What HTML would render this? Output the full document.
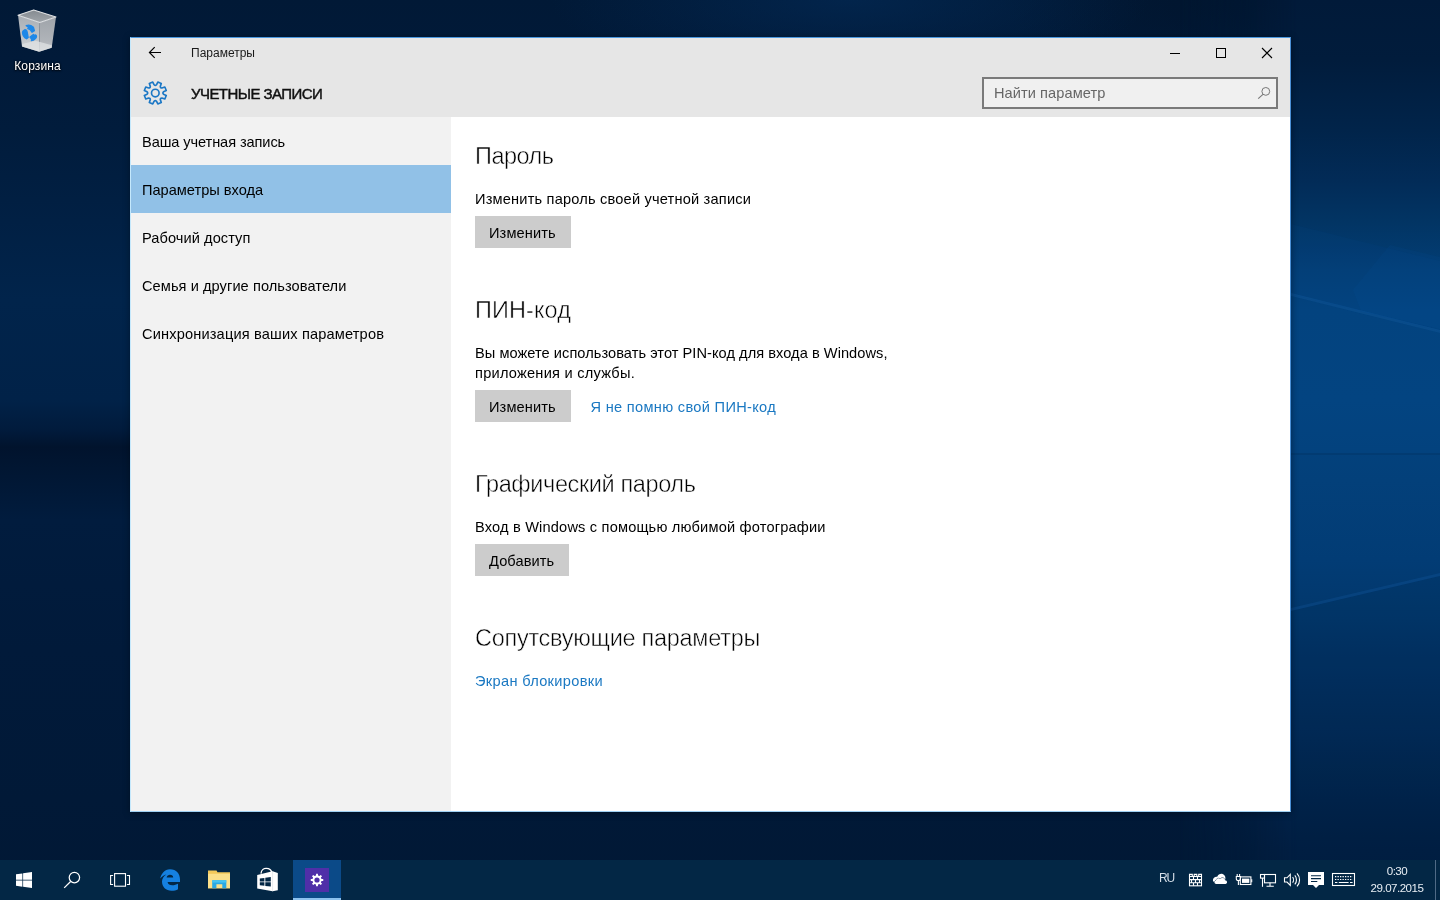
<!DOCTYPE html>
<html lang="ru">
<head>
<meta charset="utf-8">
<title>Параметры</title>
<style>
*{box-sizing:border-box;margin:0;padding:0}
html,body{width:1440px;height:900px;overflow:hidden}
body{position:relative;font-family:"Liberation Sans",sans-serif;color:#000;background:#021a38}
.abs{position:absolute}
#desk{will-change:transform;position:absolute;left:0;top:0;width:1440px;height:900px;overflow:hidden}
#desk svg{position:absolute;left:0;top:0}
/* window */
#win{will-change:transform;position:absolute;left:130px;top:37px;width:1161px;height:775px;background:#fff;border:1px solid #4a98df;border-left-color:#c4e8fc;border-right-color:#4a8fd6;border-bottom-color:#9fd0f2;box-shadow:0 1px 7px rgba(0,0,0,.35)}
#hdr{position:absolute;left:0;top:0;width:1159px;height:79px;background:#e6e6e6}
#side{position:absolute;left:0;top:79px;width:320px;height:694px;background:#f2f2f2}
.nav{position:absolute;left:0;width:320px;height:48px;line-height:48px;padding-top:1px;padding-left:11px;font-size:14.6px;white-space:nowrap}
.nav.sel{background:#91c1e7}
.t{position:absolute;white-space:nowrap;line-height:1}
.h{position:absolute;white-space:nowrap;line-height:1;font-size:23.5px;color:#000;-webkit-text-stroke:0.5px #fff}
.p{position:absolute;white-space:nowrap;line-height:20px;font-size:14.6px}
.btn{position:absolute;height:32px;background:#ccc;font-size:14.6px;line-height:34px;padding-left:14px;letter-spacing:0.1px;white-space:nowrap}
.lnk{position:absolute;white-space:nowrap;line-height:20px;font-size:14.6px;color:#1a78c2}
/* taskbar */
#tb{will-change:transform;position:absolute;left:0;top:860px;width:1440px;height:40px;background:#032745}
</style>
</head>
<body>
<div id="desk">
  <div class="abs" style="left:0;top:0;width:1440px;height:900px;background:radial-gradient(ellipse 300px 80px at 850px 0px,rgba(3,44,90,.6),rgba(3,44,90,0) 100%),radial-gradient(ellipse 300px 90px at 1300px 0px,rgba(1,15,34,.5),rgba(1,15,34,0) 100%),linear-gradient(180deg,#011936 0.00%,#011a39 6.67%,#011c3c 14.44%,#011f42 22.22%,#01244b 33.33%,#012248 44.44%,#011b3c 47.78%,#01132d 49.67%,#011632 52.00%,#011c3e 57.78%,#011a3a 72.22%,#011937 88.89%,#011835 100.00%)"></div>
  <div class="abs" style="left:1180px;top:0;width:260px;height:900px;background:linear-gradient(180deg,#011a39 0.00%,#011c3c 6.67%,#01244a 14.44%,#022b57 20.00%,#023463 24.44%,#033e75 30.00%,#03427d 34.44%,#03437f 44.44%,#03407a 53.33%,#023c75 62.22%,#02376b 68.89%,#022f60 75.56%,#022a56 82.22%,#01234b 88.89%,#011f43 94.44%,#011d40 100.00%);-webkit-mask-image:linear-gradient(90deg,rgba(0,0,0,0) 0%,rgba(0,0,0,.35) 25%,#000 45%);mask-image:linear-gradient(90deg,rgba(0,0,0,0) 0%,rgba(0,0,0,.35) 25%,#000 45%)"></div>
  <svg class="abs" style="left:1291px;top:0" width="149" height="860" viewBox="0 0 149 860">
    <path d="M0 224 L149 261 L149 331 L0 294Z" fill="#0a5ab0" opacity="0.07"/>
    <path d="M62 290 L99 245 L149 257 L149 329 L70 311Z" fill="#0c60b8" opacity="0.07"/>
    <path d="M0 293 L149 330 L149 333 L0 296Z" fill="#2a7ad0" opacity="0.16"/>
    <path d="M0 296 L149 333 L149 453 L0 453Z" fill="#0a5ab0" opacity="0.05"/>
    <path d="M0 453 H149 V455 H0Z" fill="#011a39" opacity="0.14"/>
    <path d="M0 608 L149 573 L149 576 L0 611Z" fill="#2a7ad0" opacity="0.15"/>
    <path d="M0 611 L149 576 L149 860 L0 860Z" fill="#011a39" opacity="0.10"/>
  </svg>
  <svg class="abs" style="left:0;top:0" width="80" height="60" viewBox="0 0 80 60">
    <defs>
      <linearGradient id="bl" x1="0" y1="0" x2="0" y2="1"><stop offset="0" stop-color="#a9aeb4"/><stop offset="0.7" stop-color="#c3c7cb"/><stop offset="1" stop-color="#d9dbdd"/></linearGradient>
      <linearGradient id="br" x1="0" y1="0" x2="0" y2="1"><stop offset="0" stop-color="#9fa4aa"/><stop offset="0.7" stop-color="#b0b4b9"/><stop offset="1" stop-color="#c9ccd0"/></linearGradient>
      <linearGradient id="bi" x1="0" y1="0" x2="0" y2="1"><stop offset="0" stop-color="#848a90"/><stop offset="1" stop-color="#a0a5aa"/></linearGradient>
    </defs>
    <path d="M18 15.3 L39.8 22.5 L39.2 51.7 L22 46.4Z" fill="url(#bl)"/>
    <path d="M39.8 22.5 L56 16.9 L51.7 47.8 L39.2 51.7Z" fill="url(#br)"/>
    <path d="M22.3 44 L35.5 40.8 L51.9 45.2 L51.7 47.8 L39.2 51.7 L22 46.4Z" fill="#dfe1e3" opacity="0.75"/>
    <path d="M18 15.3 L33.7 9.9 L56 16.9 L39.8 22.5Z" fill="url(#bi)" stroke="#dfe1e3" stroke-width="1.1" stroke-linejoin="round"/>
    <g fill="#1e88e8" stroke="#1e88e8" stroke-width="1.3" stroke-linejoin="round">
      <path d="M26.2 25.6 C28.5 24.6 31.5 25.5 33.4 27.2 L34.4 30.6 L32 32.2 C31 30 29.4 28.8 27.8 28.6 L28.6 27.2Z"/>
      <path d="M24.2 30 C25.3 29.3 26.6 30 27 31.4 C27.6 33.6 27.8 35.5 28.2 37.4 L26.6 38.8 C24.4 37.6 22.6 34.8 22.5 32.4 C22.5 31.2 23.2 30.4 24.2 30Z"/>
      <path d="M30 37 L33.4 34.4 L33.4 35.6 C34.6 35 35.6 34.6 36.2 35.4 C36.8 36.6 35.8 38.8 33.4 40.2 L31.4 40.6 L31.6 39.2Z"/>
    </g>
  </svg>
  <div class="t" id="binlbl" style="left:0;top:60px;width:75px;text-align:center;font-size:12px;color:#fff;text-shadow:0 1px 2px rgba(0,0,0,.9),0 0 2px rgba(0,0,0,.8);letter-spacing:0.1px">Корзина</div>
</div>

<div id="win">
  <div id="hdr">
    <svg class="abs" style="left:17px;top:8px" width="16" height="14" viewBox="0 0 16 14"><path d="M6.7 1.1 L1.4 6.5 L6.7 11.9 M1.5 6.5 H13" fill="none" stroke="#000" stroke-width="1.15"/></svg>
    <div class="t" id="ttl" style="left:60px;top:9px;font-size:12px;color:#1a1a1a">Параметры</div>
    <div class="t" id="cat" style="left:60px;top:48px;font-size:15px;letter-spacing:-0.56px;-webkit-text-stroke:0.45px #111;color:#111">УЧЕТНЫЕ ЗАПИСИ</div>
    <div class="abs" id="srch" style="left:851px;top:39px;width:296px;height:32px;border:2px solid #7a7a7a;background:#f0f0f0">
      <div class="t" style="left:10px;top:7px;font-size:14.6px;color:#666;letter-spacing:0.07px">Найти параметр</div>
      <svg class="abs" style="left:272px;top:6px" width="16" height="16" viewBox="0 0 16 16"><circle cx="9.8" cy="6.4" r="3.9" fill="none" stroke="#777" stroke-width="1"/><path d="M7 9.3 L2.2 13.7" stroke="#777" stroke-width="1.1" fill="none"/></svg>
    </div>
    <svg class="abs" style="left:12px;top:43px" width="25" height="24" viewBox="-0.3 0 25 24"><path d="M13.16 3.78 L14.53 1.04 L17.96 2.46 L17.00 5.37 Q16.95 7.05 18.63 7.00 L21.54 6.04 L22.96 9.47 L20.22 10.84 Q19.00 12.00 20.22 13.16 L22.96 14.53 L21.54 17.96 L18.63 17.00 Q16.95 16.95 17.00 18.63 L17.96 21.54 L14.53 22.96 L13.16 20.22 Q12.00 19.00 10.84 20.22 L9.47 22.96 L6.04 21.54 L7.00 18.63 Q7.05 16.95 5.37 17.00 L2.46 17.96 L1.04 14.53 L3.78 13.16 Q5.00 12.00 3.78 10.84 L1.04 9.47 L2.46 6.04 L5.37 7.00 Q7.05 7.05 7.00 5.37 L6.04 2.46 L9.47 1.04 L10.84 3.78 Q12.00 5.00 13.16 3.78Z" fill="none" stroke="#1b77c5" stroke-width="1.65" stroke-linejoin="round"/><circle cx="12" cy="12" r="3.8" fill="none" stroke="#1b77c5" stroke-width="1.65"/></svg>
    <!-- window controls -->
    <div class="abs" style="left:1039px;top:15px;width:10px;height:1px;background:#000"></div>
    <div class="abs" style="left:1085px;top:10px;width:10px;height:10px;border:1px solid #000"></div>
    <svg class="abs" style="left:1130px;top:9px" width="12" height="12" viewBox="0 0 12 12"><path d="M1 1 L11 11 M11 1 L1 11" stroke="#000" stroke-width="1.1" fill="none"/></svg>
  </div>
  <div id="side">
    <div class="nav" style="top:0;letter-spacing:-0.09px">Ваша учетная запись</div>
    <div class="nav sel" style="top:48px">Параметры входа</div>
    <div class="nav" style="top:96px;letter-spacing:0.07px">Рабочий доступ</div>
    <div class="nav" style="top:144px;letter-spacing:0.07px">Семья и другие пользователи</div>
    <div class="nav" style="top:192px;letter-spacing:0.16px">Синхронизация ваших параметров</div>
  </div>
  <div id="main" class="abs" style="left:320px;top:79px;width:839px;height:694px">
    <div class="h" style="left:24px;top:28px;letter-spacing:-0.5px">Пароль</div>
    <div class="p" style="left:24px;top:72px;letter-spacing:0.19px">Изменить пароль своей учетной записи</div>
    <div class="btn" style="left:24px;top:99px;width:96px">Изменить</div>

    <div class="h" style="left:24px;top:182px;letter-spacing:0.1px">ПИН-код</div>
    <div class="p" style="left:24px;top:226px;letter-spacing:0.05px">Вы можете использовать этот PIN-код для входа в Windows,</div>
    <div class="p" style="left:24px;top:246px;letter-spacing:0.24px">приложения и службы.</div>
    <div class="btn" style="left:24px;top:273px;width:96px">Изменить</div>
    <div class="lnk" style="left:139.5px;top:280px;letter-spacing:0.31px">Я не помню свой ПИН-код</div>

    <div class="h" style="left:24px;top:356px;letter-spacing:-0.39px">Графический пароль</div>
    <div class="p" style="left:24px;top:400px;letter-spacing:0.18px">Вход в Windows с помощью любимой фотографии</div>
    <div class="btn" style="left:24px;top:427px;width:94px">Добавить</div>

    <div class="h" style="left:24px;top:510px;letter-spacing:-0.28px">Сопутсвующие параметры</div>
    <div class="lnk" style="left:24px;top:554px;letter-spacing:0.32px">Экран блокировки</div>
  </div>
</div>

<div id="tb">
  <div class="abs" style="left:293px;top:0;width:48px;height:40px;background:#0b4a88"></div>
  <div class="abs" style="left:293px;top:38px;width:48px;height:2px;background:#8cc1ee"></div>
  <svg class="abs" style="left:0;top:0" width="1440" height="40" viewBox="0 0 1440 40">
    <!-- start -->
    <g fill="#fff"><path d="M16 14.3 L22.4 13.4 V19.7 H16Z M23.1 13.3 L32 12 V19.7 H23.1Z M16 20.4 H22.4 V26.7 L16 25.8Z M23.1 20.4 H32 V28 L23.1 26.8Z"/></g>
    <!-- search -->
    <circle cx="74.4" cy="17.6" r="5.2" fill="none" stroke="#fff" stroke-width="1.25"/><path d="M70.6 21.5 L64.2 27.9" stroke="#fff" stroke-width="1.25" fill="none"/>
    <!-- task view -->
    <rect x="114.6" y="13.6" width="10.9" height="12.6" fill="none" stroke="#fff" stroke-width="1.1"/>
    <path d="M113.1 15.5 H110.6 V24.5 H113.1 M126.9 15.5 H129.5 V24.5 H126.9" fill="none" stroke="#fff" stroke-width="1.1"/>
    <!-- edge -->
    <g transform="translate(160,9)"><path fill="#1580e0" fill-rule="evenodd" d="M0.2 9.6 C1 5 4.5 0.2 10 0.2 C16.5 0.2 20 5 20 10.5 L20 13 L7.6 13 C7.8 15.2 9.8 16.3 12.2 16.3 C14.3 16.3 16.5 15.7 18 14.8 L18 20.2 C16.3 21.2 14 21.8 11.5 21.8 C6 21.8 2 18 2 12.5 C2 9.5 3.8 6.8 6.4 5.4 C4 6 1.8 7.5 0.2 9.6 Z M6.6 8.4 C7 6.6 8.4 5.8 10 5.8 C12 5.8 13.2 7 13.2 8.4 Z"/></g>
    <!-- explorer -->
    <path d="M208 10.5 H216.5 L217.5 12.3 H230 V28.3 H208Z" fill="#f3c95a"/>
    <rect x="208" y="13.8" width="22" height="14.5" fill="#fbe08a"/>
    <path d="M212.2 20.3 H226.3 V28.3 H222.3 V24.2 H216.4 V28.3 H212.2Z" fill="#2aa9e4"/>
    <path d="M212.2 20.3 H226.3 V22.6 H212.2Z" fill="#44c4f3"/>
    <!-- store -->
    <path d="M261 13.6 C261.3 9.8 264 8.3 266.3 8.4 C269 8.5 271.3 10 271.6 12.3" fill="none" stroke="#fff" stroke-width="1.3"/>
    <path d="M257.2 15.1 L272.6 11.2 L277.8 13 V30.2 L272.6 31.3 L257.2 28.6Z" fill="#fff"/>
    <path d="M272.6 11.2 V31.3" stroke="#d8dde2" stroke-width="0.6"/>
    <path d="M259.8 18.6 L264.4 17.9 V21.4 H259.8Z M265.3 17.8 L270.8 17 V21.4 H265.3Z M259.8 22.3 H264.4 V25.8 L259.8 25.2Z M265.3 22.3 H270.8 V26.6 L265.3 25.9Z" fill="#032745"/>
    <!-- settings -->
    <rect x="305" y="8" width="24" height="24" fill="#4f2fa8"/>
    <path d="M315.97 15.52 L316.12 13.76 L317.88 13.76 L318.03 15.52 L319.44 16.10 L320.79 14.97 L322.03 16.21 L320.90 17.56 L321.48 18.97 L323.24 19.12 L323.24 20.88 L321.48 21.03 L320.90 22.44 L322.03 23.79 L320.79 25.03 L319.44 23.90 L318.03 24.48 L317.88 26.24 L316.12 26.24 L315.97 24.48 L314.56 23.90 L313.21 25.03 L311.97 23.79 L313.10 22.44 L312.52 21.03 L310.76 20.88 L310.76 19.12 L312.52 18.97 L313.10 17.56 L311.97 16.21 L313.21 14.97 L314.56 16.10 Z" fill="#fff"/><circle cx="317" cy="20" r="2.6" fill="#4f2fa8"/>
    <!-- tray: firewall -->
    <g fill="none" stroke="#fff" stroke-width="1.1">
      <rect x="1189.5" y="16.5" width="12" height="9.3"/>
      <path d="M1189.5 19.6 H1201.5 M1189.5 22.7 H1201.5 M1193.5 16.5 V19.6 M1197.5 16.5 V19.6 M1191.5 19.6 V22.7 M1195.5 19.6 V22.7 M1199.5 19.6 V22.7 M1193.5 22.7 V25.8 M1197.5 22.7 V25.8"/>
      <path d="M1189.5 16.5 V14.4 H1192.3 V16.5 M1194.2 16.5 V14.4 H1196.8 V16.5 M1198.7 16.5 V14.4 H1201.5 V16.5"/>
    </g>
    <!-- onedrive -->
    <path d="M1213 21 C1212.6 17.6 1215.8 16.4 1217.2 16.8 C1218 14.4 1220.6 13.4 1222.6 14 C1224.6 14.7 1225.4 16.5 1225.4 18 L1225 22 L1214 22Z" fill="#fff"/>
    <path d="M1216.2 23.9 C1214.2 23.9 1213.7 21.2 1216 20.5 C1216.3 18.3 1219 17.6 1220.3 19 C1221.6 17.2 1224.8 17.8 1225 20.2 C1227.6 20.2 1227.8 23.9 1225.4 23.9Z" fill="#fff" stroke="#032745" stroke-width="0.9" paint-order="stroke"/>
    <!-- battery -->
    <g fill="none" stroke="#fff" stroke-width="1.1">
      <rect x="1240.3" y="16.9" width="10.6" height="7.6"/>
      <path d="M1251.7 19.2 V22.3"/>
      <path d="M1237.2 14 V16.3 M1239.6 14 V16.3 M1236.3 16.5 H1240.5 V18.8 C1240.5 20.2 1239.4 20.6 1238.4 20.6 C1237.4 20.6 1236.3 20.2 1236.3 18.8Z M1238.4 20.6 V25"/>
    </g>
    <rect x="1242" y="18.6" width="7.3" height="4.3" fill="#fff"/>
    <!-- network -->
    <g fill="none" stroke="#fff" stroke-width="1.1">
      <rect x="1264.5" y="14.5" width="11" height="8.3"/>
      <path d="M1270 22.8 V26.2 M1266.5 26.3 H1273.8"/>
      <rect x="1260.5" y="14.5" width="4" height="3.6"/>
      <path d="M1262.5 18.1 V26.8"/>
    </g>
    <!-- volume -->
    <g fill="none" stroke="#fff" stroke-width="1.1">
      <path d="M1284.5 17.8 H1287 L1290.3 14.4 V25.4 L1287 22 H1284.5Z"/>
      <path d="M1292.6 17.2 C1293.8 18.6 1293.8 21.2 1292.6 22.6 M1294.8 15.4 C1297 17.8 1297 22 1294.8 24.4 M1297 13.4 C1300.4 17 1300.4 22.8 1297 26.4"/>
    </g>
    <!-- action center -->
    <path d="M1308 12 H1324 V25 H1319 L1316 28 L1313 25 H1308Z" fill="#fff"/>
    <path d="M1311 15.7 H1321 M1311 18.6 H1321 M1311 21.5 H1317.3" stroke="#032745" stroke-width="1.1" fill="none"/>
    <!-- keyboard -->
    <rect x="1332.5" y="13.5" width="22" height="12" fill="none" stroke="#fff" stroke-width="1.1"/>
    <path d="M1335 16.6 H1352.6 M1335 19.5 H1352.6" stroke="#fff" stroke-width="1.2" stroke-dasharray="1.3 1.2" fill="none"/>
    <path d="M1335 22.5 H1337.4 M1338.8 22.5 H1348.6 M1350 22.5 H1352.6" stroke="#fff" stroke-width="1.2" fill="none"/>
    <!-- show desktop divider -->
    <rect x="1435" y="0" width="1" height="40" fill="#4f6a86"/>
  </svg>
  <div class="t" style="left:1159px;top:12px;font-size:12px;color:#d5dee8;letter-spacing:-1.2px">RU</div>
  <div class="t" style="left:1367px;top:5px;width:60px;text-align:center;font-size:11.6px;color:#e8eef4;letter-spacing:-0.5px">0:30</div>
  <div class="t" style="left:1367px;top:22px;width:60px;text-align:center;font-size:11.6px;color:#e8eef4;letter-spacing:-0.52px">29.07.2015</div>
</div>
</body>
</html>
